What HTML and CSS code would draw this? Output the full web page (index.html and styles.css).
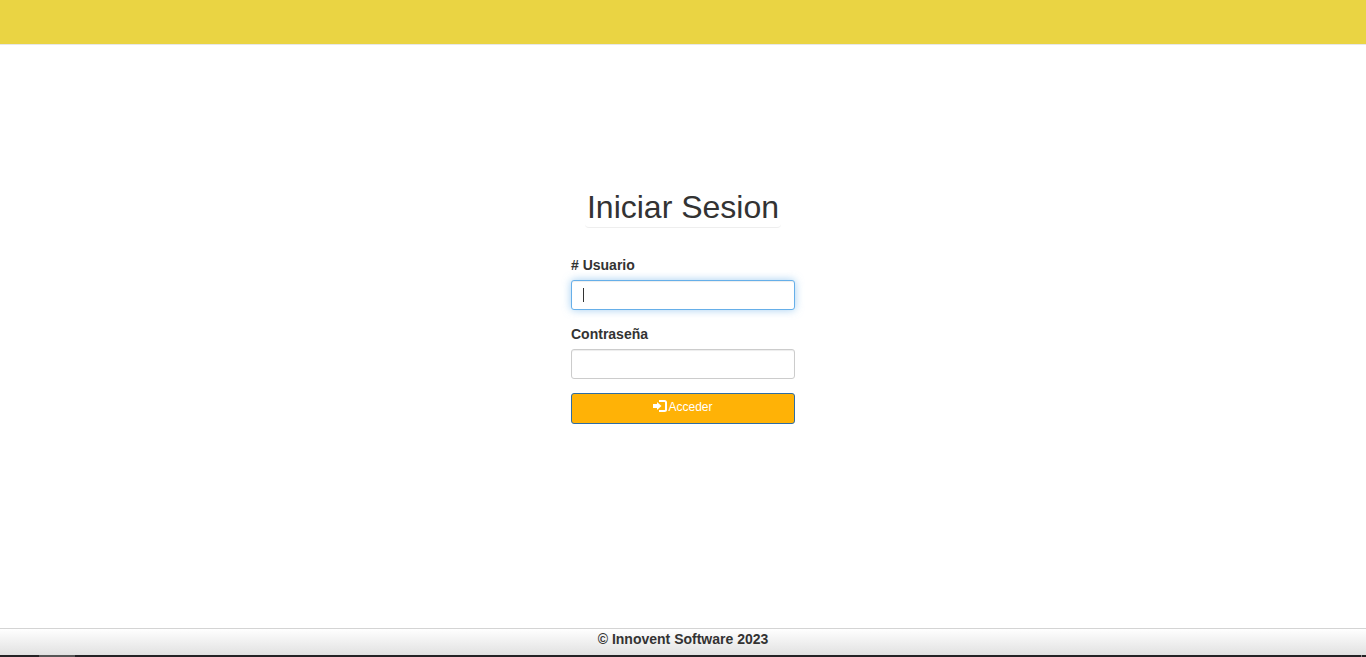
FILE: index.html
```html
<!DOCTYPE html>
<html lang="es">
<head>
<meta charset="utf-8">
<meta name="viewport" content="width=device-width, initial-scale=1">
<title>Iniciar Sesion</title>
<link rel="stylesheet" href="styles.css">
</head>
<body>
<header class="navbar"></header>
<main class="content">
  <form class="login">
    <h1 class="title">Iniciar Sesion</h1>
    <div class="field">
      <label for="usuario"># Usuario</label>
      <div class="control active"><input id="usuario" type="text" autocomplete="off"></div>
    </div>
    <div class="field">
      <label for="clave">Contraseña</label>
      <div class="control"><input id="clave" type="password"></div>
    </div>
    <button class="submit" type="submit">
      <svg class="icon" viewBox="0 0 14 12" aria-hidden="true">
        <path fill="currentColor" d="M0 4h4V2l4.500 4L4 10V8H0z"/>
        <path fill="none" stroke="currentColor" stroke-width="2" d="M6 1h5.500Q13 1 13 2.500v7Q13 11 11.500 11H6"/>
      </svg><span>Acceder</span>
    </button>
  </form>
</main>
<footer class="footer">© Innovent Software 2023</footer>
<div class="taskbar"><span class="task"></span><span class="edge"></span></div>
</body>
</html>
```
FILE: styles.css
```css
* {
  box-sizing: border-box;
}

body {
  margin: 0;
  min-height: 100vh;
  display: flex;
  flex-direction: column;
  background: #fff;
  color: #333;
  font-family: "Liberation Sans", Arial, sans-serif;
  font-size: 14px;
  line-height: 20px;
}

.navbar {
  height: 45px;
  background: #ead443;
  border-bottom: 1px solid #e7e7e7;
}

.content {
  flex: 1;
  display: flex;
  justify-content: center;
  padding-top: 144px;
}

.login {
  width: 224px;
  display: flex;
  flex-direction: column;
}

.title {
  align-self: center;
  margin: 0 0 27px;
  padding: 0 2px 2px;
  border-bottom: 1px solid #eee;
  border-radius: 4px;
  font-size: 32px;
  font-weight: 400;
  line-height: 36px;
}

.field {
  margin-bottom: 14px;
}

.field label {
  display: block;
  margin-bottom: 5px;
  font-weight: 700;
}

.control {
  position: relative;
}

.control input {
  display: block;
  width: 100%;
  height: 30px;
  padding: 5px 10px;
  border: 1px solid #ccc;
  border-radius: 3px;
  background: #fff;
  color: #555;
  font: inherit;
  font-size: 12px;
  outline: 0;
  box-shadow: inset 0 1px 1px rgba(0, 0, 0, 0.075);
}

.active input {
  border-color: #66afe9;
  box-shadow: inset 0 1px 1px rgba(0, 0, 0, 0.075), 0 0 8px rgba(102, 175, 233, 0.6);
}

/* Text cursor of the active field */
.active::after {
  content: "";
  position: absolute;
  left: 12px;
  top: 8px;
  width: 1px;
  height: 14px;
  background: #333;
}

.submit {
  display: flex;
  justify-content: center;
  align-items: flex-start;
  gap: 1px;
  height: 31px;
  padding: 4px 10px;
  border: 1px solid #2e6da4;
  border-radius: 3px;
  background: #ffb206;
  color: #fff;
  font: inherit;
  font-size: 12px;
  line-height: 18px;
}

.icon {
  width: 14px;
  height: 12px;
  margin-top: 2px;
}

.footer {
  height: 27px;
  border-top: 1px solid #d4d4d4;
  background: linear-gradient(#fff, #e1e1e1);
  text-align: center;
  font-weight: 700;
}

.taskbar {
  height: 2px;
  display: flex;
  justify-content: space-between;
  padding: 0 4px 0 39px;
  background: #242225;
}

.task {
  width: 36px;
  background: #555;
}

.edge {
  width: 1px;
  background: #888;
}
```
